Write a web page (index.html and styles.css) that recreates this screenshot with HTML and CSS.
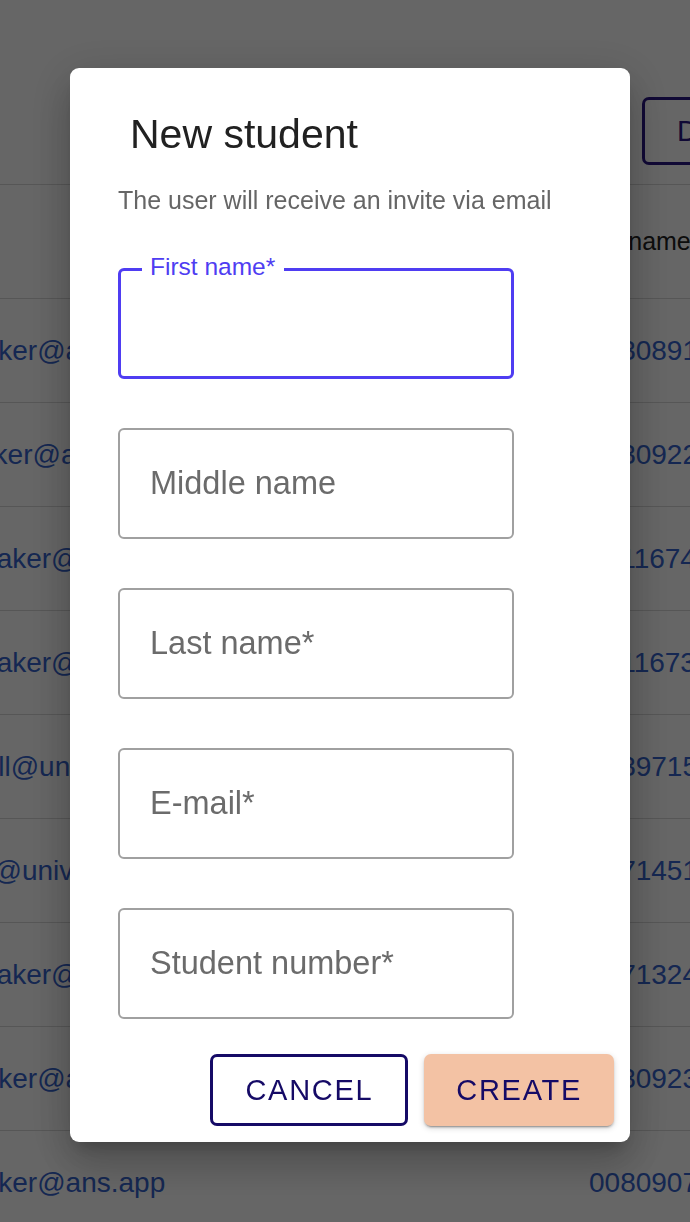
FILE: index.html
```html
<!DOCTYPE html>
<html lang="en">
<head>
    <meta charset="UTF-8">
    <meta name="viewport" content="width=device-width, initial-scale=1.0">
    <title>Students</title>
    <link rel="stylesheet" href="styles.css">
</head>
<body>

    <div class="page">
        <header class="topbar">
            <button class="btn-outline">DOWNLOAD</button>
        </header>

        <div class="table">
            <div class="row head">
                <div class="cell email"></div>
                <div class="cell num">Full name</div>
            </div>
            <div class="row"><div class="cell email">m.baker@ans.app</div><div class="cell num">0030891</div></div>
            <div class="row"><div class="cell email">w.baker@ans.app</div><div class="cell num">0030922</div></div>
            <div class="row"><div class="cell email">mi.maker@ans.app</div><div class="cell num">0011674</div></div>
            <div class="row"><div class="cell email">mi.maker@ans.app</div><div class="cell num">0011673</div></div>
            <div class="row"><div class="cell email">m.bell@university.nl</div><div class="cell num">0039715</div></div>
            <div class="row"><div class="cell email">j.kim@university.nl</div><div class="cell num">0071451</div></div>
            <div class="row"><div class="cell email">mi.maker@ans.app</div><div class="cell num">0071324</div></div>
            <div class="row"><div class="cell email">m.baker@ans.app</div><div class="cell num">0030923</div></div>
            <div class="row"><div class="cell email">m.baker@ans.app</div><div class="cell num">0080907</div></div>
        </div>
    </div>

    <!-- New student dialog -->
    <div class="backdrop">
        <div class="dialog">
            <h2 class="dialog-title">New student</h2>
            <p class="dialog-text">The user will receive an invite via email</p>

            <div class="fields">
                <div class="field focused">
                    <label class="field-label">First name*</label>
                    <input type="text">
                </div>
                <div class="field">
                    <input type="text" placeholder="Middle name">
                </div>
                <div class="field">
                    <input type="text" placeholder="Last name*">
                </div>
                <div class="field">
                    <input type="email" placeholder="E-mail*">
                </div>
                <div class="field">
                    <input type="text" placeholder="Student number*">
                </div>
            </div>

            <div class="actions">
                <button class="btn cancel">CANCEL</button>
                <button class="btn create">CREATE</button>
            </div>
        </div>
    </div>

</body>
</html>
```

FILE: styles.css
```css
/* General Styles */
body {
    font-family: 'Liberation Sans', Arial, sans-serif;
    margin: 0;
    padding: 0;
    background: #ffffff;
    width: 690px;
    height: 1222px;
    overflow: hidden;
}

/* Page behind the dialog */
.page {
    width: 690px;
}

.topbar {
    height: 185px;
    box-sizing: border-box;
    border-bottom: 1px solid #d8d8d8;
    padding: 97px 0 0 642px;
    display: flex;
    align-items: flex-start;
    white-space: nowrap;
}

.btn-outline {
    flex-shrink: 0;
    height: 68px;
    padding: 0 32px;
    background: #ffffff;
    border: 3px solid #2a1785;
    border-radius: 7px;
    color: #2a1785;
    font-family: inherit;
    font-size: 29px;
    letter-spacing: 1.7px;
}

.table {
    margin-left: -64px;
}

.row {
    display: flex;
    align-items: center;
    height: 104px;
    box-sizing: border-box;
    border-bottom: 1px solid #d8d8d8;
    white-space: nowrap;
}

.row.head {
    height: 114px;
}

.cell {
    font-size: 28px;
    color: #3563cc;
}

.cell.email {
    width: 653px;
    flex-shrink: 0;
}

.head .cell {
    font-size: 25px;
    color: #222222;
    margin-left: -4px;
}

/* Dialog */
.backdrop {
    position: fixed;
    top: 0;
    left: 0;
    right: 0;
    bottom: 0;
    background: rgba(0, 0, 0, 0.6);
    padding: 68px 0 0 70px;
}

.dialog {
    width: 560px;
    box-sizing: border-box;
    padding: 42px 16px 16px 48px;
    background: #ffffff;
    border-radius: 9px;
    box-shadow: 0 11px 15px -7px rgba(0, 0, 0, 0.2),
                0 24px 38px 3px rgba(0, 0, 0, 0.14),
                0 9px 46px 8px rgba(0, 0, 0, 0.12);
}

.dialog-title {
    margin: 0 0 0 12px;
    font-size: 41px;
    line-height: 48px;
    font-weight: 400;
    color: #212121;
}

.dialog-text {
    margin: 27px 0 0 0;
    font-size: 25px;
    line-height: 30px;
    color: #666666;
}

.fields {
    margin-top: 53px;
    display: flex;
    flex-direction: column;
    gap: 49px;
}

.field {
    position: relative;
    width: 396px;
}

.field input {
    display: block;
    width: 100%;
    height: 111px;
    box-sizing: border-box;
    margin: 0;
    padding: 0 0 0 30px;
    border: 2px solid #a0a0a0;
    border-radius: 6px;
    background: #ffffff;
    font-family: inherit;
    font-size: 32.5px;
    color: #212121;
    outline: none;
}

.field input::placeholder {
    color: #6b6b6b;
    opacity: 1;
}

.field.focused input {
    border: 3px solid #4f3df2;
}

/* Floating label sits on the border */
.field-label {
    position: absolute;
    top: -15px;
    left: 24px;
    padding: 0 9px 0 8px;
    background: #ffffff;
    font-size: 24.5px;
    line-height: 28px;
    color: #4f3df2;
}

/* Buttons */
.actions {
    margin-top: 35px;
    display: flex;
    justify-content: flex-end;
    gap: 16px;
}

.btn {
    height: 72px;
    box-sizing: border-box;
    padding: 0 32px;
    font-family: inherit;
    font-size: 29px;
    letter-spacing: 1.7px;
    color: #150a66;
    border-radius: 7px;
    cursor: pointer;
}

.btn.cancel {
    background: #ffffff;
    border: 3px solid #150a66;
}

.btn.create {
    background: #f3c2a4;
    border: none;
    box-shadow: 0 3px 1px -2px rgba(0, 0, 0, 0.2),
                0 2px 2px 0 rgba(0, 0, 0, 0.14),
                0 2px 6px 0 rgba(0, 0, 0, 0.16);
}
```
